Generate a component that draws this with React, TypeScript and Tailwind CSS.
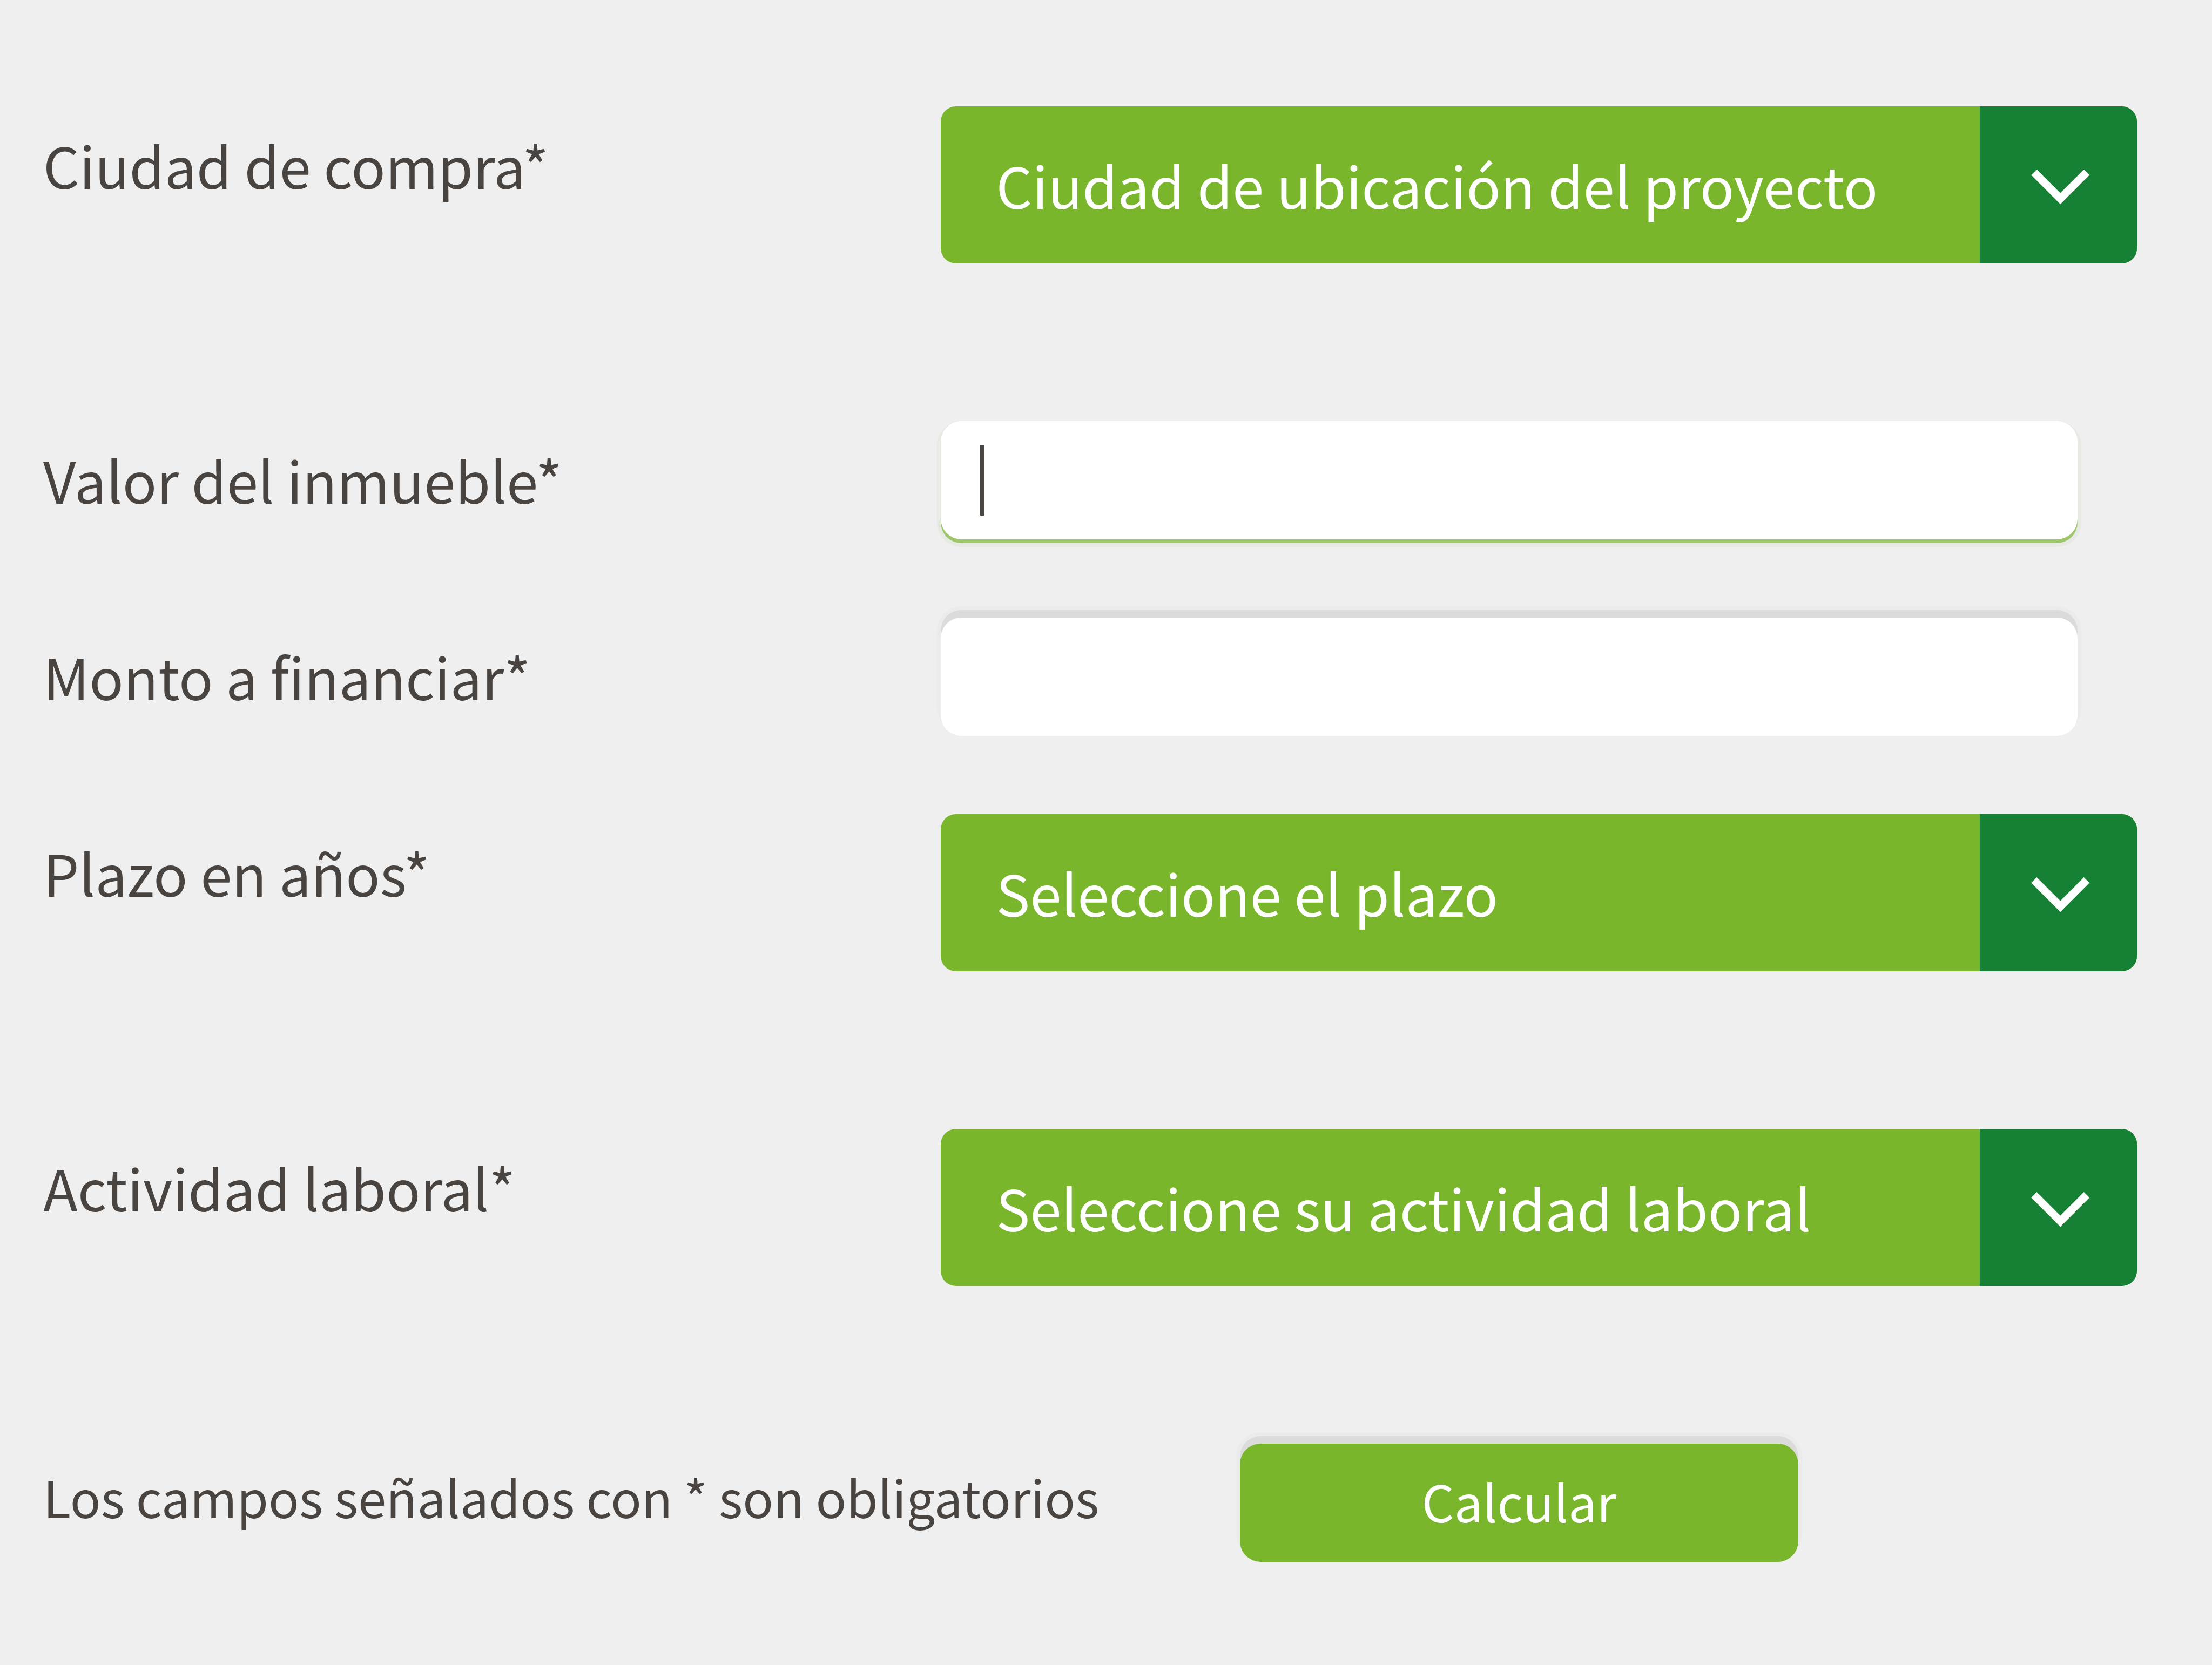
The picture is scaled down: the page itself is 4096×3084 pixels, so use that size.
import type { ReactNode } from "react";

function FieldRow({ id, label, className, children }: { id: string; label: string; className: string; children: ReactNode }) {
  return (
    <div className={`grid grid-cols-[3fr_4fr] items-start ${className}`}>
      <label htmlFor={id} className="text-[105px] leading-[214px] whitespace-nowrap">
        {label}
      </label>
      {children}
    </div>
  );
}

function SelectField({ id, label, placeholder }: { id: string; label: string; placeholder: string }) {
  return (
    <FieldRow id={id} label={label} className="mb-[292px]">
      <div className="relative overflow-hidden rounded-[28px]">
        <select
          id={id}
          className="block h-[291px] w-full appearance-none bg-[#79b62c] pr-[300px] pb-[2px] pl-[103px] text-[105px] text-white outline-none"
        >
          <option>{placeholder}</option>
        </select>
        <span className="pointer-events-none absolute inset-y-0 right-0 w-[291px] bg-[#168034]">
          <svg viewBox="0 0 40 40" className="size-full" fill="none" aria-hidden="true">
            <path d="M13.8 16.8 20.5 23.5 27.2 16.8" stroke="white" strokeWidth="2" />
          </svg>
        </span>
      </div>
    </FieldRow>
  );
}

const inputBase = "block h-[219px] w-full rounded-[38px] bg-white px-[72px] text-[105px] outline-none";

export default function App() {
  return (
    <main className="min-h-screen bg-[#efefef] font-['Noto_Sans_CJK_JP',sans-serif] text-[#4a4441]">
      <form className="pt-[197px] pr-[139px] pb-[190px] pl-[80px]" onSubmit={(e) => e.preventDefault()}>
        <SelectField id="ciudad" label="Ciudad de compra*" placeholder="Ciudad de ubicación del proyecto" />

        <FieldRow id="valor" label="Valor del inmueble*" className="mb-[145px]">
          <div className="relative mr-[110px]">
            <input
              id="valor"
              type="text"
              className={`${inputBase} shadow-[0_7px_0_0_#9dc56a,0_7px_0_7px_#e6eae2]`}
            />
            <span className="pointer-events-none absolute top-[44px] left-[73px] h-[131px] w-[7px] bg-[#4a4441]" />
          </div>
        </FieldRow>

        <FieldRow id="monto" label="Monto a financiar*" className="mb-[145px]">
          <div className="mr-[110px]">
            <input
              id="monto"
              type="text"
              className={`${inputBase} shadow-[0_-14px_0_0_#dbdbdb,0_-14px_0_7px_#ebebeb]`}
            />
          </div>
        </FieldRow>

        <SelectField id="plazo" label="Plazo en años*" placeholder="Seleccione el plazo" />
        <SelectField id="actividad" label="Actividad laboral*" placeholder="Seleccione su actividad laboral" />

        <div className="flex items-start">
          <p className="flex-1 text-[94px] leading-[194px] whitespace-nowrap">
            Los campos señalados con * son obligatorios
          </p>
          <button
            type="submit"
            className="mr-[627px] h-[219px] w-[1034px] rounded-[38px] bg-[#79b62c] pb-[10px] text-[94px] leading-[140px] text-white shadow-[0_-14px_0_0_#dbdbdb,0_-14px_0_7px_#ebebeb]"
          >
            Calcular
          </button>
        </div>
      </form>
    </main>
  );
}
